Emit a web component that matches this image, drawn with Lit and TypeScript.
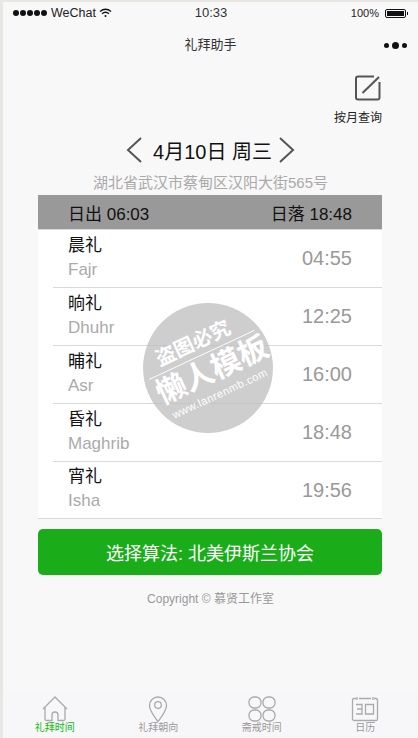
import { LitElement, css, html, svg } from 'lit';
import { customElement } from 'lit/decorators.js';

const prayers = [
    { zh: '晨礼', en: 'Fajr', time: '04:55' },
    { zh: '晌礼', en: 'Dhuhr', time: '12:25' },
    { zh: '晡礼', en: 'Asr', time: '16:00' },
    { zh: '昏礼', en: 'Maghrib', time: '18:48' },
    { zh: '宵礼', en: 'Isha', time: '19:56' },
];

const tabIcons = [
    svg`<path d="M5 13 L17 1 L29 13 M7 11.500 V23 Q7 24.500 8.500 24.500 H14 V19 Q14 16 17 16 Q20 16 20 19 V24.500 H25.500 Q27 24.500 27 23 V11.500"/>`,
    svg`<path d="M17 25.500 C13 20 8.500 15 8.500 9.500 A8.500 8.500 0 0 1 25.500 9.500 C25.500 15 21 20 17 25.500 Z"/><circle cx="17" cy="9" r="3.300"/>`,
    svg`<rect x="4" y="1" width="12" height="11" rx="5"/><rect x="18" y="1" width="12" height="11" rx="5"/><rect x="4" y="14" width="12" height="11" rx="5"/><rect x="18" y="14" width="12" height="11" rx="5"/>`,
    svg`<path d="M8 2.500 H6 Q4.500 2.500 4.500 4 V23 Q4.500 24.500 6 24.500 H28 Q29.500 24.500 29.500 23 V4 Q29.500 2.500 28 2.500 H26 M11 2.500 H23 M9 1 V4 M25 1 V4"/><path d="M8 8.500 H14 V13 H9 M14 13 V18 H8 M17.500 8.500 H25.500 V18 H17.500 Z"/>`,
];

const tabs = [
    { label: '礼拜时间', active: true },
    { label: '礼拜朝向', active: false },
    { label: '斋戒时间', active: false },
    { label: '日历', active: false },
];

@customElement('app-root')
export class AppRoot extends LitElement {
    static styles = css`
        :host {
            display: block;
            width: 418px;
            height: 738px;
            overflow: hidden;
            position: relative;
            box-sizing: border-box;
            padding: 2px 0 0 3px;
            background: #e8e7e3;
            font-family: 'Liberation Sans', 'Noto Sans CJK SC', sans-serif;
        }

        .screen {
            height: 736px;
            background: #f8f8f8;
            display: flex;
            flex-direction: column;
        }

        .status {
            height: 22px;
            display: grid;
            grid-template-columns: 1fr auto 1fr;
            align-items: center;
            padding: 0 9px 0 10px;
            font-size: 12.500px;
            color: #222;
        }

        .status-left {
            display: flex;
            align-items: center;
            gap: 3px;
        }

        .signal {
            display: flex;
            gap: 1px;
            margin-right: 1px;
        }

        .signal i {
            width: 6px;
            height: 6px;
            border-radius: 50%;
            background: #111;
        }

        .clock {
            font-size: 13px;
            color: #333;
            margin-top: -2px;
        }

        .status-right {
            display: flex;
            justify-content: flex-end;
            align-items: center;
            gap: 6px;
            font-size: 11px;
            padding-right: 3px;
        }

        .battery {
            width: 17px;
            height: 5px;
            border: 1px solid #111;
            border-radius: 2px;
            padding: 1px;
            box-sizing: content-box;
            position: relative;
        }

        .battery::before {
            content: '';
            display: block;
            height: 100%;
            background: #111;
        }

        .battery::after {
            content: '';
            position: absolute;
            right: -3px;
            top: 2px;
            width: 1px;
            height: 3px;
            background: #111;
        }

        .nav {
            height: 40px;
            padding-bottom: 2px;
            box-sizing: border-box;
            display: flex;
            align-items: center;
            justify-content: center;
            position: relative;
            font-size: 13px;
            color: #333;
        }

        .more {
            position: absolute;
            right: 11px;
            top: 18px;
            display: flex;
            align-items: center;
            gap: 3px;
        }

        .more i {
            width: 5px;
            height: 5px;
            border-radius: 50%;
            background: #111;
        }

        .more i:nth-child(2) {
            width: 7px;
            height: 7px;
        }

        .month {
            align-self: flex-end;
            width: 48px;
            margin-right: 36px;
            display: flex;
            flex-direction: column;
            align-items: flex-end;
            padding-top: 11px;
            font-size: 12px;
            line-height: 16px;
            color: #222;
            gap: 9px;
        }

        .month svg {
            display: block;
            margin-right: 1px;
        }

        .date {
            display: flex;
            justify-content: center;
            align-items: center;
            gap: 7px;
            margin-top: 7px;
            height: 34px;
            font-size: 20px;
            color: #111;
        }

        .date svg:first-child {
            margin-right: 4px;
        }

        .address {
            text-align: center;
            font-size: 15px;
            line-height: 20px;
            color: #aaa;
            margin-top: 6px;
        }

        .card {
            margin: 2px 36px 0 35px;
        }

        .sun {
            height: 34px;
            background: #999;
            display: flex;
            justify-content: space-between;
            align-items: center;
            padding: 0 30px;
            font-size: 17px;
            color: #111;
        }

        .list {
            background: #fff;
            border-top: 1px solid #d9d9d9;
            border-bottom: 1px solid #d9d9d9;
        }

        .row {
            height: 57px;
            margin-left: 15px;
            padding: 0 30px 0 15px;
            display: flex;
            justify-content: space-between;
            align-items: center;
            border-top: 1px solid #d9d9d9;
        }

        .row:first-child {
            border-top: none;
        }

        .row:last-child {
            height: 56px;
        }

        .names {
            display: flex;
            flex-direction: column;
            font-size: 17px;
            line-height: 24px;
            margin-top: -2px;
            color: #111;
        }

        .names span:last-child {
            color: #aaa;
        }

        .time {
            font-size: 20px;
            color: #999;
        }

        .algo {
            margin: 10px 36px 0 35px;
            height: 46px;
            border-radius: 5px;
            background: #1aad19;
            color: #fff;
            display: flex;
            justify-content: center;
            align-items: center;
            font-size: 18px;
        }

        .copy {
            margin-top: 16px;
            text-align: center;
            font-size: 12px;
            line-height: 16px;
            color: #999;
        }

        .tabbar {
            margin-top: auto;
            height: 48px;
            background: #f7f7fa;
            display: grid;
            grid-template-columns: repeat(4, 1fr);
            padding-right: 1px;
        }

        .tab {
            display: flex;
            flex-direction: column;
            align-items: center;
            font-size: 10px;
            line-height: 12px;
            color: #999;
        }

        .tab.active {
            color: #09bb07;
        }

        .tab svg {
            display: block;
            fill: none;
            stroke: #aaa;
            stroke-width: 1.300;
            margin-top: 6px;
        }

        .stamp {
            position: absolute;
            left: 143px;
            top: 303px;
            width: 130px;
            height: 130px;
            border-radius: 50%;
            background: rgba(190, 190, 190, 0.75);
            color: #fff;
        }

        .stamp-inner {
            position: absolute;
            inset: 0;
            transform: rotate(-25deg);
            display: flex;
            flex-direction: column;
            align-items: center;
            padding-top: 24px;
            box-sizing: border-box;
        }

        .stamp-top {
            font-size: 20px;
            line-height: 24px;
            font-weight: bold;
            margin-right: 6px;
            white-space: nowrap;
        }

        .stamp-line {
            width: 116px;
            height: 1px;
            background: #fff;
            margin-top: 2px;
        }

        .stamp-main {
            font-size: 30px;
            line-height: 36px;
            font-weight: bold;
            margin-left: 6px;
            white-space: nowrap;
        }

        .stamp-url {
            font-size: 11px;
            line-height: 12px;
            letter-spacing: 0.500px;
            white-space: nowrap;
        }
    `;

    render() {
        return html`
            <div class="screen">
                <div class="status">
                    <div class="status-left">
                        <span class="signal"><i></i><i></i><i></i><i></i><i></i></span>
                        <span>WeChat</span>
                        <svg width="13" height="10" viewBox="0 0 13 10" fill="none" stroke="#111" stroke-width="1.400">
                            <path d="M1 3.500 Q6.500 -1 12 3.500 M3 5.800 Q6.500 2.800 10 5.800"/>
                            <circle cx="6.500" cy="8" r="1" fill="#111" stroke="none"/>
                        </svg>
                    </div>
                    <span class="clock">10:33</span>
                    <div class="status-right"><span>100%</span><span class="battery"></span></div>
                </div>
                <div class="nav">
                    礼拜助手
                    <span class="more"><i></i><i></i><i></i></span>
                </div>
                <div class="month">
                    <svg width="26" height="26" viewBox="0 0 26 26" fill="none" stroke="#555" stroke-width="2">
                        <path d="M19 1.500 H3 Q1 1.500 1 3.500 V22.500 Q1 24.500 3 24.500 H22.500 Q24.500 24.500 24.500 22.500 V7"/>
                        <path d="M7.500 18 L24 2"/>
                    </svg>
                    <span>按月查询</span>
                </div>
                <div class="date">
                    <svg width="16" height="26" viewBox="0 0 16 26" fill="none" stroke="#555" stroke-width="2">
                        <path d="M15 1 L2 13 L15 25"/>
                    </svg>
                    <span>4月10日 周三</span>
                    <svg width="16" height="26" viewBox="0 0 16 26" fill="none" stroke="#555" stroke-width="2">
                        <path d="M1 1 L14 13 L1 25"/>
                    </svg>
                </div>
                <div class="address">湖北省武汉市蔡甸区汉阳大街565号</div>
                <div class="card">
                    <div class="sun"><span>日出 06:03</span><span>日落 18:48</span></div>
                    <div class="list">
                        ${prayers.map(
                            (p) => html`<div class="row">
                                <div class="names"><span>${p.zh}</span><span>${p.en}</span></div>
                                <span class="time">${p.time}</span>
                            </div>`,
                        )}
                    </div>
                </div>
                <div class="algo">选择算法: 北美伊斯兰协会</div>
                <div class="copy">Copyright © 慕贤工作室</div>
                <div class="tabbar">
                    ${tabs.map(
                        (t, i) => html`<div class="tab ${t.active ? 'active' : ''}">
                            <svg width="34" height="26" viewBox="0 0 34 26">${tabIcons[i]}</svg>
                            <span>${t.label}</span>
                        </div>`,
                    )}
                </div>
            </div>
            <div class="stamp">
                <div class="stamp-inner">
                    <span class="stamp-top">盗图必究</span>
                    <span class="stamp-line"></span>
                    <span class="stamp-main">懒人模板</span>
                    <span class="stamp-url">www.lanrenmb.com</span>
                </div>
            </div>
        `;
    }
}
